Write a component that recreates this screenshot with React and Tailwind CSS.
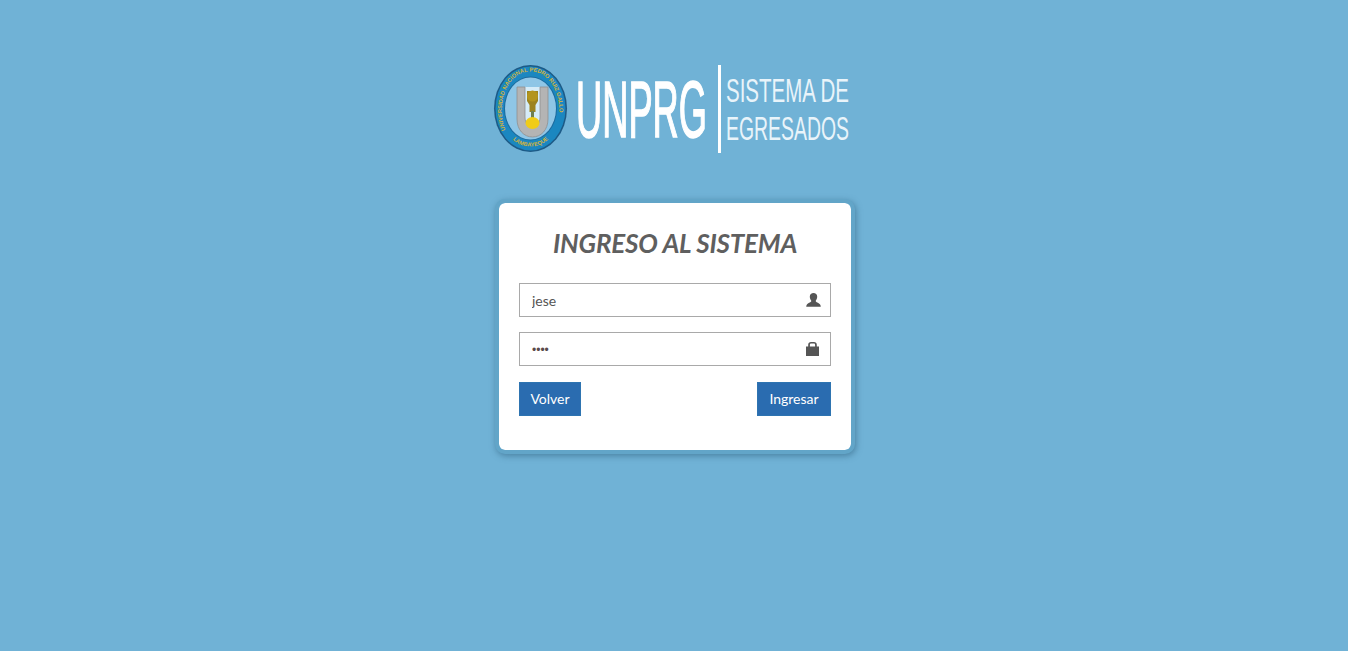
import React, { useState } from "react";

const font = { fontFamily: '"Liberation Sans", Arial, sans-serif' };

const UserIcon = () => (
  <svg width="15" height="14" viewBox="0 0 15 14" fill="#555555">
    <path d="M7.5 0C9.6 0 11.2 1.4 11.2 3.6C11.2 5.2 10.6 6.6 9.8 7.5V8.6C10.8 9.6 13 10.2 13.9 11.2C14.4 11.8 14.7 12.7 14.8 13.8H0.2C0.3 12.7 0.6 11.8 1.1 11.2C2 10.2 4.2 9.6 5.2 8.6V7.5C4.4 6.6 3.8 5.2 3.8 3.6C3.8 1.4 5.4 0 7.5 0Z" />
  </svg>
);

const LockIcon = () => (
  <svg width="13" height="14" viewBox="0 0 13 14" fill="#555555">
    <path fillRule="evenodd" d="M2.2 4.5V2.8C2.2 1 3.4 0 5 0H8C9.6 0 10.8 1 10.8 2.8V4.5H13V14H0V4.5H2.2ZM3.9 4.5H9.1V3C9.1 2.1 8.6 1.6 7.7 1.6H5.3C4.4 1.6 3.9 2.1 3.9 3V4.5Z" />
  </svg>
);

const Logo = () => (
  <svg width="352" height="90" viewBox="0 0 352 90" className="block overflow-visible">
    <defs>
      <path id="sealTop" d="M11.5 65 C1 38 14 6.5 36.5 6.5 C59 6.5 72 38 61.5 65" />
      <path id="sealBottom" d="M17 72 C25 84.5 48 84.5 56 72" />
    </defs>
    {/* sello */}
    <ellipse cx="36.5" cy="43.5" rx="36.5" ry="43.5" fill="#1d5a86" />
    <ellipse cx="36.5" cy="43.5" rx="35" ry="42" fill="#1b87c0" />
    <ellipse cx="36.5" cy="43.5" rx="26.5" ry="32" fill="#1d6a9c" />
    <ellipse cx="36.5" cy="43.5" rx="25.5" ry="31" fill="#8fc6e6" />
    <text fontSize="5.7" fontWeight="700" fill="#d2b33a" style={font}>
      <textPath href="#sealTop">UNIVERSIDAD NACIONAL PEDRO RUIZ GALLO</textPath>
    </text>
    <text fontSize="5.6" fontWeight="700" fill="#d2b33a" style={font}>
      <textPath href="#sealBottom" startOffset="3">LAMBAYEQUE</textPath>
    </text>
    <rect x="31" y="22" width="15" height="38" fill="#d6ecf8" />
    <path
      d="M23 22H31V52C31 58 34 62 38.5 62C43 62 46 58 46 52V22H54V54C54 65 47 72 38.5 72C30 72 23 65 23 54Z"
      fill="#b4b4b4"
      stroke="#8f8f8f"
      strokeWidth="0.8"
    />
    <path d="M33 26H44V36L41.5 40V47H35.5V40L33 36Z" fill="#9c8420" />
    <circle cx="38.5" cy="31" r="5.5" fill="#b3951e" />
    <rect x="37" y="46" width="3" height="8" fill="#6f7f50" />
    <ellipse cx="38.5" cy="58" rx="7" ry="6" fill="#f0cc18" />
    {/* marca */}
    <text
      x="82"
      y="71.5"
      fontSize="80"
      fill="#ffffff"
      stroke="#ffffff"
      strokeWidth="1.6"
      textLength="131"
      lengthAdjust="spacingAndGlyphs"
      style={font}
    >
      UNPRG
    </text>
    <rect x="224" y="0" width="3" height="88" fill="#ffffff" />
    <text
      x="232"
      y="37"
      fontSize="32.5"
      fill="#e9f4fa"
      textLength="123"
      lengthAdjust="spacingAndGlyphs"
      style={font}
    >
      SISTEMA DE
    </text>
    <text
      x="232"
      y="75"
      fontSize="32.5"
      fill="#e9f4fa"
      textLength="123"
      lengthAdjust="spacingAndGlyphs"
      style={font}
    >
      EGRESADOS
    </text>
  </svg>
);

const Field = ({ type, value, onChange, icon, iconClass, inputClass }) => (
  <div className="relative">
    <input
      type={type}
      value={value}
      onChange={(e) => onChange(e.target.value)}
      className={inputClass}
    />
    <span className={iconClass}>{icon}</span>
  </div>
);

const App = () => {
  const [user, setUser] = useState("jese");
  const [password, setPassword] = useState("jese");

  return (
    <div className="min-h-[651px] bg-[#70b2d6] flex flex-col items-center pt-[65px] font-['Lato',sans-serif]">
      <div className="ml-[-8px]">
        <Logo />
      </div>
      <div className="mt-[44px] ml-[2px] w-[360px] h-[255px] rounded-[10px] border-4 border-[#62a5c8] bg-white bg-clip-padding px-5 pt-[23px] shadow-[1px_2px_6px_rgba(50,100,130,0.6)]">
        <h1 className="text-center text-[26px] leading-[34px] font-bold italic text-[#5f5f5f] tracking-[-0.2px]">
          INGRESO AL SISTEMA
        </h1>
        <form className="mt-[23px] flex flex-col gap-[15px]">
          <Field
            type="text"
            value={user}
            onChange={setUser}
            icon={<UserIcon />}
            iconClass="absolute right-[10px] top-[10px] flex"
            inputClass="block w-full h-[34px] border border-[#a9a9a9] bg-white pl-3 pr-9 text-sm text-[#555555] outline-none font-['Lato',sans-serif]"
          />
          <Field
            type="password"
            value={password}
            onChange={setPassword}
            icon={<LockIcon />}
            iconClass="absolute right-[12px] top-[10px] flex"
            inputClass="block w-full h-[34px] border border-[#a9a9a9] bg-white pl-3 pr-9 pt-px text-[12px] text-[#5a4a4a] outline-none font-['Liberation_Sans',sans-serif]"
          />
          <div className="mt-px flex justify-between">
            <button type="button" className="h-[34px] w-[62px] border border-[#2e74b1] bg-[#2a6cb0] text-sm text-white">
              Volver
            </button>
            <button type="button" className="h-[34px] w-[74px] border border-[#2e74b1] bg-[#2a6cb0] text-sm text-white">
              Ingresar
            </button>
          </div>
        </form>
      </div>
    </div>
  );
};

export default App;
